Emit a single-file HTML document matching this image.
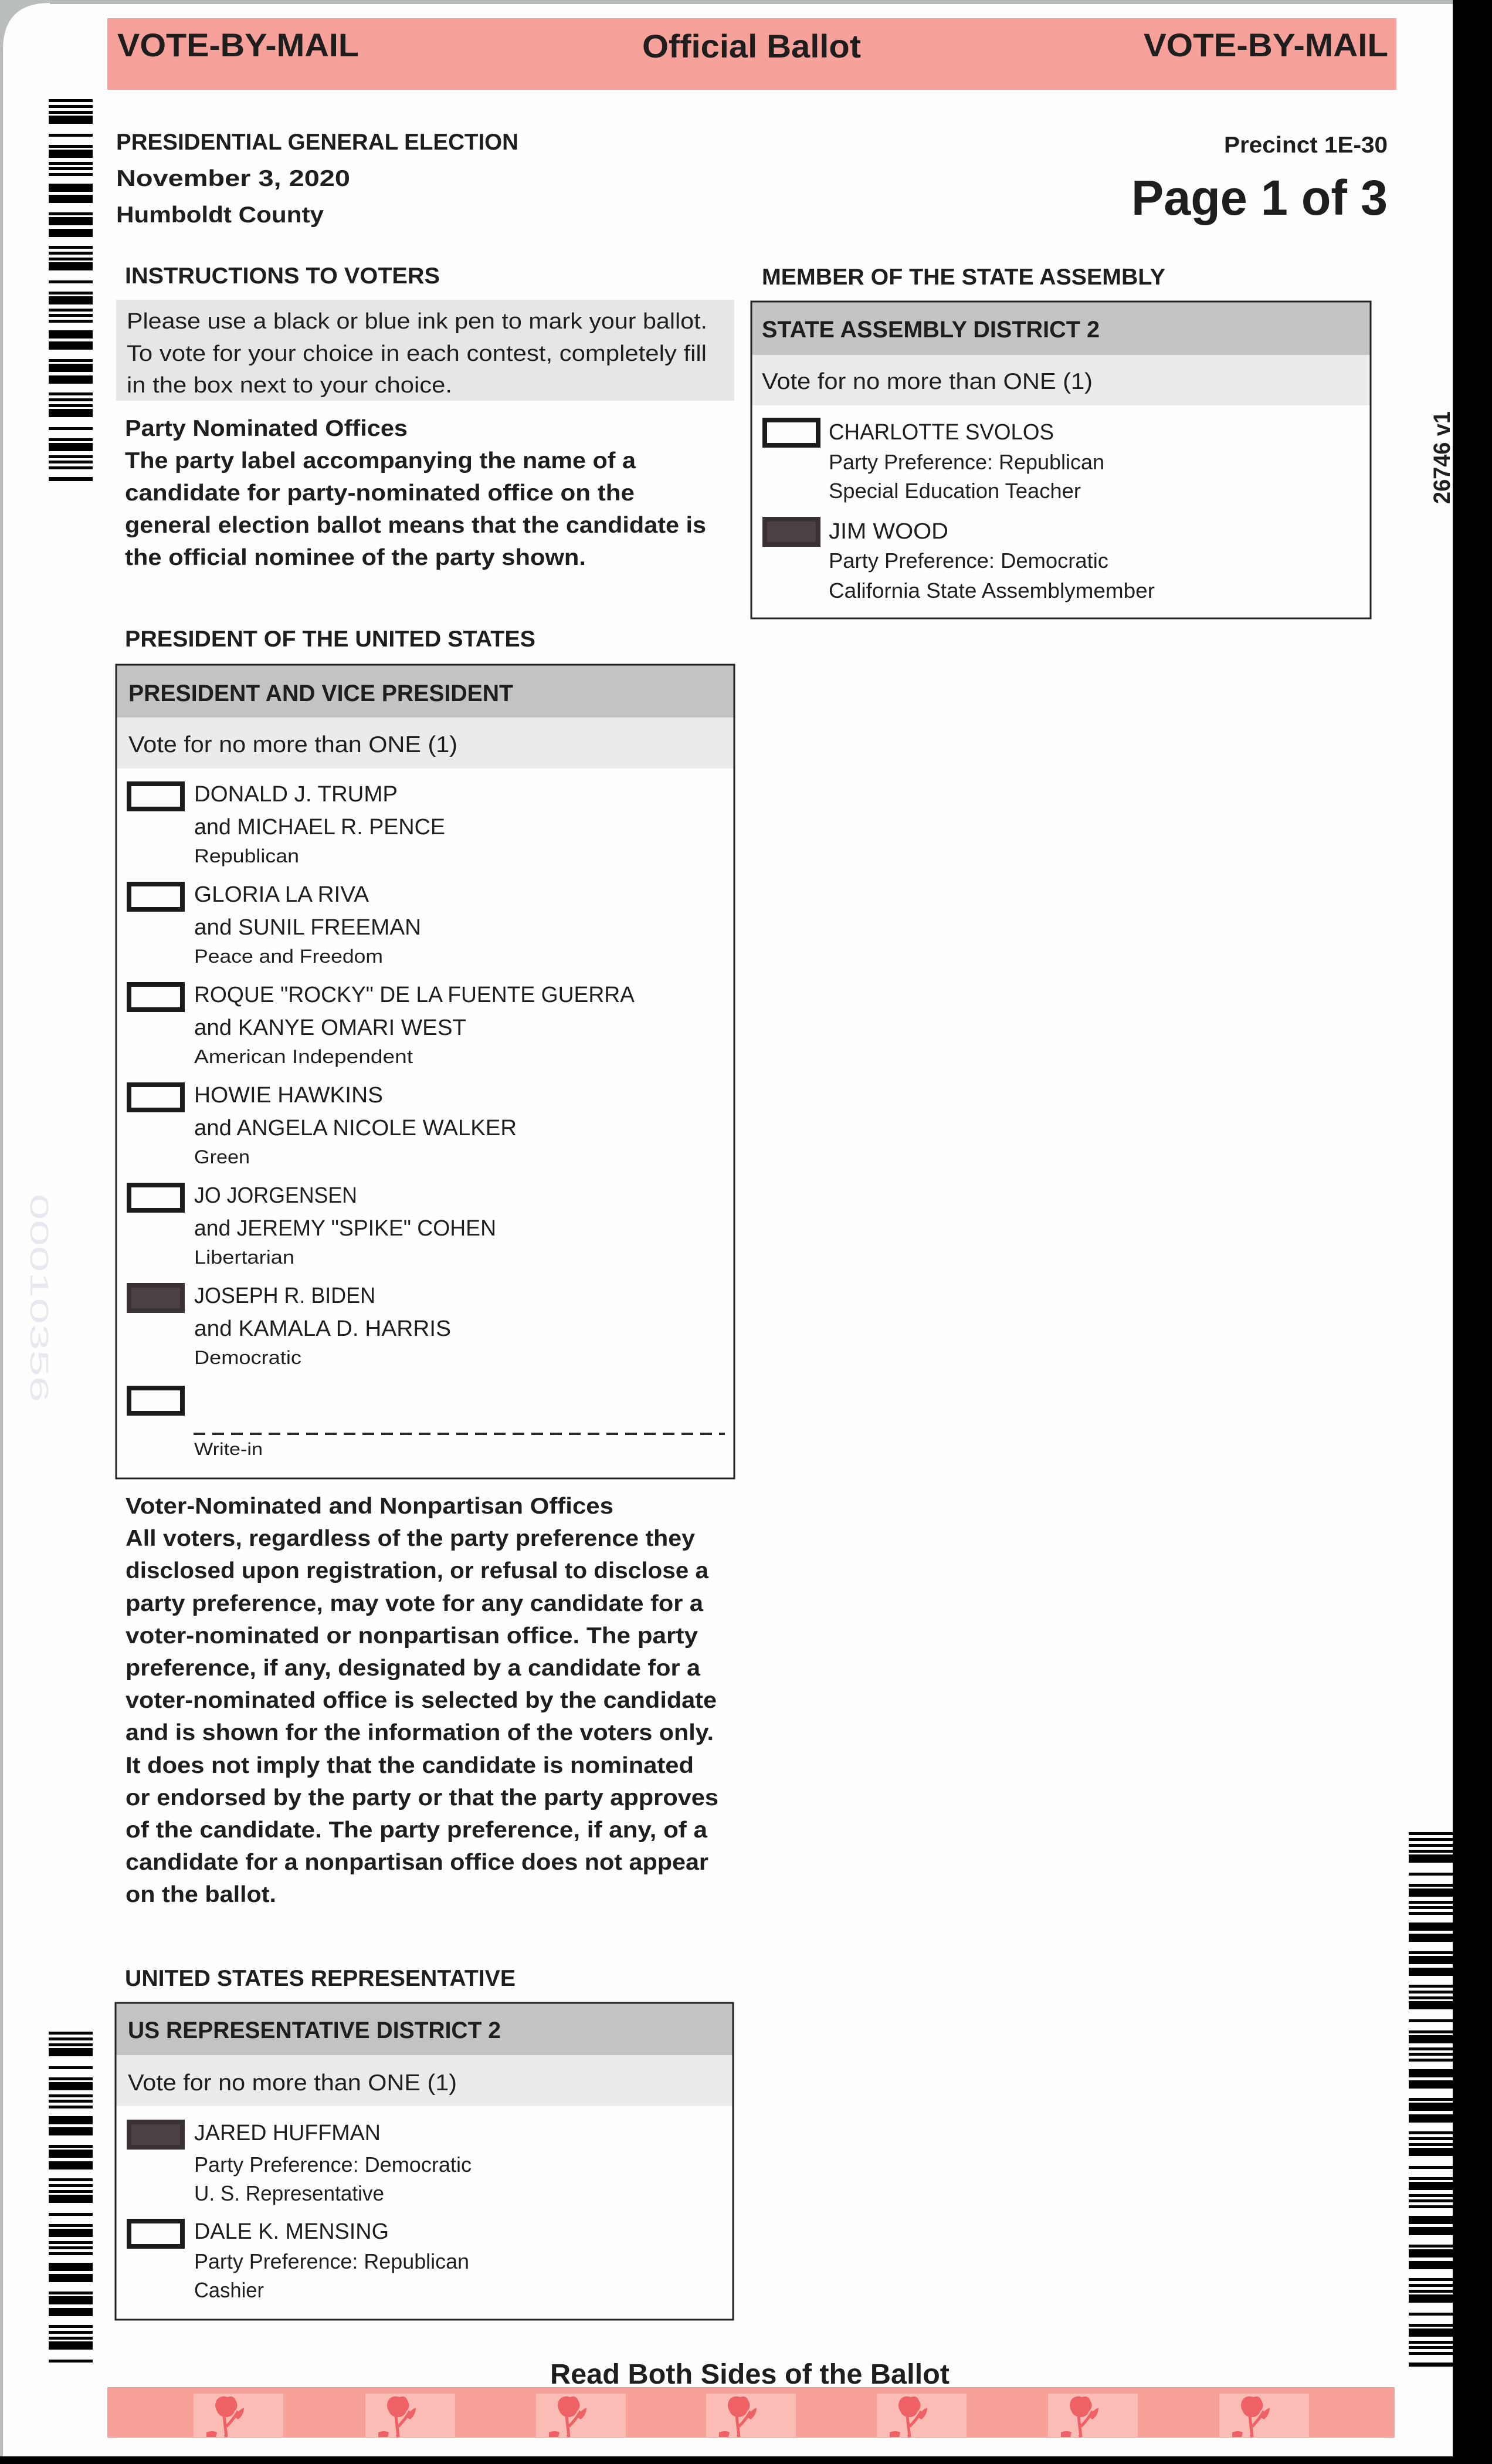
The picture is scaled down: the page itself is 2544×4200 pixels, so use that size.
<!DOCTYPE html>
<html><head><meta charset="utf-8"><style>
html,body{margin:0;padding:0;background:#b9bdbd;}
svg{display:block;}
text{font-family:"Liberation Sans",sans-serif;fill:#1e1e1e;}
.b{font-weight:bold;}
</style></head><body>
<svg xmlns="http://www.w3.org/2000/svg" width="2544" height="4200" viewBox="0 0 2544 4200">
<defs>
<g id="bc">
<rect x="0" y="0" width="75" height="5"/><rect x="0" y="10" width="75" height="5"/><rect x="0" y="20" width="75" height="5"/>
<rect x="0" y="28" width="75" height="14"/><rect x="0" y="59" width="75" height="5"/><rect x="0" y="78" width="75" height="5"/>
<rect x="0" y="86" width="75" height="14"/><rect x="0" y="107" width="75" height="5"/><rect x="0" y="116" width="75" height="5"/>
<rect x="0" y="126" width="75" height="5"/><rect x="0" y="144" width="75" height="14"/><rect x="0" y="163" width="75" height="14"/>
<rect x="0" y="193" width="75" height="5"/><rect x="0" y="201" width="75" height="14"/><rect x="0" y="221" width="75" height="14"/>
</g>
<g id="cb"><rect x="4" y="4" width="91" height="43" fill="none" stroke="#1c1c1c" stroke-width="8"/></g>
<g id="cbf"><rect x="0" y="0" width="99" height="51" fill="#3a3134"/><rect x="8" y="8" width="83" height="35" fill="#4a4045"/></g>
<g id="fl">
<rect x="0" y="0" width="153" height="74" fill="#fbbcb5"/>
<path d="M40 10 q8-8 18-4 q10-4 14 6 q6 10-2 18 q-4 10-14 10 q-12 0-16-10 q-6-10 0-20z" fill="#ee6266"/>
<path d="M52 38 l4 36 M56 56 q12-12 20-26 M56 74 l-2-4" stroke="#ee6266" stroke-width="5" fill="none"/>
<path d="M70 40 q6-12 16-16 q0 12-10 20 z" fill="#ee6266"/>
<path d="M22 66 q10-4 18 0 l-2 8 h-16z" fill="#ee6266"/>
</g>
</defs>
<!-- page -->
<path d="M5 85 Q5 5 85 5 H2477 V4187 H5 Z" fill="#fefefe"/>
<rect x="2477" y="0" width="67" height="4200" fill="#000"/>
<rect x="0" y="4187" width="2544" height="13" fill="#000"/>
<rect x="85" y="0" width="2392" height="7" fill="#b4b8b8"/>

<!-- header -->
<rect x="183" y="31" width="2198" height="122" fill="#f6a29b"/>
<text class="b" x="200" y="96" font-size="56" textLength="412" lengthAdjust="spacingAndGlyphs">VOTE-BY-MAIL</text>
<text class="b" x="1095" y="98" font-size="56" textLength="373" lengthAdjust="spacingAndGlyphs">Official Ballot</text>
<text class="b" x="1950" y="96" font-size="56" textLength="417" lengthAdjust="spacingAndGlyphs">VOTE-BY-MAIL</text>

<!-- barcodes -->
<use href="#bc" x="83" y="169"/><use href="#bc" x="83" y="419"/><use href="#bc" x="83" y="669"/>
<use href="#bc" x="83" y="3463"/><use href="#bc" x="83" y="3713"/><use href="#bc" x="83" y="3963" />
<rect x="2402" y="3123" width="75" height="5"/>
<use href="#bc" x="2402" y="3133"/><use href="#bc" x="2402" y="3383"/><use href="#bc" x="2402" y="3633"/><use href="#bc" x="2402" y="3883"/>
<rect x="6" y="4030" width="170" height="157" fill="#fefefe"/>
<rect x="6" y="820" width="170" height="100" fill="#fefefe"/>
<rect x="2390" y="4034" width="87" height="153" fill="#fefefe"/>

<text x="0" y="0" font-size="44" style="fill:#e8e9f0" transform="translate(52,2035) rotate(90)" textLength="355" lengthAdjust="spacingAndGlyphs">00010356</text>
<text class="b" x="0" y="0" font-size="40" transform="translate(2472,859) rotate(-90)" textLength="158" lengthAdjust="spacingAndGlyphs">26746 v1</text>

<!-- election info -->
<text class="b" x="198" y="255" font-size="39" textLength="686" lengthAdjust="spacingAndGlyphs">PRESIDENTIAL GENERAL ELECTION</text>
<text class="b" x="198" y="317" font-size="39" textLength="399" lengthAdjust="spacingAndGlyphs">November 3, 2020</text>
<text class="b" x="198" y="379" font-size="39" textLength="354" lengthAdjust="spacingAndGlyphs">Humboldt County</text>
<text class="b" x="2087" y="260" font-size="39" textLength="279" lengthAdjust="spacingAndGlyphs">Precinct 1E-30</text>
<text class="b" x="1929" y="366" font-size="84" textLength="437" lengthAdjust="spacingAndGlyphs">Page 1 of 3</text>

<!-- instructions -->
<text class="b" x="213" y="483" font-size="39" textLength="537" lengthAdjust="spacingAndGlyphs">INSTRUCTIONS TO VOTERS</text>
<rect x="198" y="511" width="1054" height="172" fill="#e6e6e6"/>
<text x="216" y="560" font-size="38" textLength="990" lengthAdjust="spacingAndGlyphs">Please use a black or blue ink pen to mark your ballot.</text>
<text x="216" y="615" font-size="38" textLength="989" lengthAdjust="spacingAndGlyphs">To vote for your choice in each contest, completely fill</text>
<text x="216" y="669" font-size="38" textLength="555" lengthAdjust="spacingAndGlyphs">in the box next to your choice.</text>
<text class="b" x="213" y="743" font-size="39" textLength="482" lengthAdjust="spacingAndGlyphs">Party Nominated Offices</text>
<text class="b" x="213" y="798" font-size="39" textLength="871" lengthAdjust="spacingAndGlyphs">The party label accompanying the name of a</text>
<text class="b" x="213" y="853" font-size="39" textLength="869" lengthAdjust="spacingAndGlyphs">candidate for party-nominated office on the</text>
<text class="b" x="213" y="908" font-size="39" textLength="991" lengthAdjust="spacingAndGlyphs">general election ballot means that the candidate is</text>
<text class="b" x="213" y="963" font-size="39" textLength="786" lengthAdjust="spacingAndGlyphs">the official nominee of the party shown.</text>

<!-- president -->
<text class="b" x="213" y="1102" font-size="39" textLength="700" lengthAdjust="spacingAndGlyphs">PRESIDENT OF THE UNITED STATES</text>
<rect x="198" y="1133" width="1054" height="90" fill="#c3c3c3"/>
<rect x="198" y="1223" width="1054" height="87" fill="#ebebeb"/>
<rect x="198" y="1133" width="1054" height="1387" fill="none" stroke="#222" stroke-width="3"/>
<text class="b" x="219" y="1195" font-size="40" textLength="656" lengthAdjust="spacingAndGlyphs">PRESIDENT AND VICE PRESIDENT</text>
<text x="219" y="1282" font-size="39" textLength="561" lengthAdjust="spacingAndGlyphs">Vote for no more than ONE (1)</text>

<use href="#cb" x="216" y="1332"/>
<text x="331" y="1366" font-size="38" textLength="347" lengthAdjust="spacingAndGlyphs">DONALD J. TRUMP</text>
<text x="331" y="1422" font-size="38" textLength="428" lengthAdjust="spacingAndGlyphs">and MICHAEL R. PENCE</text>
<text x="331" y="1470" font-size="32" textLength="179" lengthAdjust="spacingAndGlyphs">Republican</text>

<use href="#cb" x="216" y="1503"/>
<text x="331" y="1537" font-size="38" textLength="298" lengthAdjust="spacingAndGlyphs">GLORIA LA RIVA</text>
<text x="331" y="1593" font-size="38" textLength="387" lengthAdjust="spacingAndGlyphs">and SUNIL FREEMAN</text>
<text x="331" y="1641" font-size="32" textLength="322" lengthAdjust="spacingAndGlyphs">Peace and Freedom</text>

<use href="#cb" x="216" y="1674"/>
<text x="331" y="1708" font-size="38" textLength="751" lengthAdjust="spacingAndGlyphs">ROQUE "ROCKY" DE LA FUENTE GUERRA</text>
<text x="331" y="1764" font-size="38" textLength="464" lengthAdjust="spacingAndGlyphs">and KANYE OMARI WEST</text>
<text x="331" y="1812" font-size="32" textLength="373" lengthAdjust="spacingAndGlyphs">American Independent</text>

<use href="#cb" x="216" y="1845"/>
<text x="331" y="1879" font-size="38" textLength="322" lengthAdjust="spacingAndGlyphs">HOWIE HAWKINS</text>
<text x="331" y="1935" font-size="38" textLength="550" lengthAdjust="spacingAndGlyphs">and ANGELA NICOLE WALKER</text>
<text x="331" y="1983" font-size="32" textLength="95" lengthAdjust="spacingAndGlyphs">Green</text>

<use href="#cb" x="216" y="2016"/>
<text x="331" y="2050" font-size="38" textLength="278" lengthAdjust="spacingAndGlyphs">JO JORGENSEN</text>
<text x="331" y="2106" font-size="38" textLength="515" lengthAdjust="spacingAndGlyphs">and JEREMY "SPIKE" COHEN</text>
<text x="331" y="2154" font-size="32" textLength="171" lengthAdjust="spacingAndGlyphs">Libertarian</text>

<use href="#cbf" x="216" y="2187"/>
<text x="331" y="2221" font-size="38" textLength="309" lengthAdjust="spacingAndGlyphs">JOSEPH R. BIDEN</text>
<text x="331" y="2277" font-size="38" textLength="438" lengthAdjust="spacingAndGlyphs">and KAMALA D. HARRIS</text>
<text x="331" y="2325" font-size="32" textLength="183" lengthAdjust="spacingAndGlyphs">Democratic</text>

<use href="#cb" x="216" y="2362"/>
<line x1="330" y1="2444" x2="1236" y2="2444" stroke="#2a2a2a" stroke-width="4" stroke-dasharray="20 12"/>
<text x="331" y="2480" font-size="30" textLength="117" lengthAdjust="spacingAndGlyphs">Write-in</text>

<!-- voter-nominated -->
<g font-size="39">
<text class="b" x="214" y="2580" textLength="832" lengthAdjust="spacingAndGlyphs">Voter-Nominated and Nonpartisan Offices</text>
<text class="b" x="214" y="2635" textLength="971" lengthAdjust="spacingAndGlyphs">All voters, regardless of the party preference they</text>
<text class="b" x="214" y="2690" textLength="994" lengthAdjust="spacingAndGlyphs">disclosed upon registration, or refusal to disclose a</text>
<text class="b" x="214" y="2746" textLength="985" lengthAdjust="spacingAndGlyphs">party preference, may vote for any candidate for a</text>
<text class="b" x="214" y="2801" textLength="976" lengthAdjust="spacingAndGlyphs">voter-nominated or nonpartisan office.  The party</text>
<text class="b" x="214" y="2856" textLength="980" lengthAdjust="spacingAndGlyphs">preference, if any, designated by a candidate for a</text>
<text class="b" x="214" y="2911" textLength="1008" lengthAdjust="spacingAndGlyphs">voter-nominated office is selected by the candidate</text>
<text class="b" x="214" y="2966" textLength="1003" lengthAdjust="spacingAndGlyphs">and is shown for the information of the voters only.</text>
<text class="b" x="214" y="3022" textLength="969" lengthAdjust="spacingAndGlyphs">It does not imply that the candidate is nominated</text>
<text class="b" x="214" y="3077" textLength="1011" lengthAdjust="spacingAndGlyphs">or endorsed by the party or that the party approves</text>
<text class="b" x="214" y="3132" textLength="992" lengthAdjust="spacingAndGlyphs">of the candidate.  The party preference, if any, of a</text>
<text class="b" x="214" y="3187" textLength="994" lengthAdjust="spacingAndGlyphs">candidate for a nonpartisan office does not appear</text>
<text class="b" x="214" y="3242" textLength="257" lengthAdjust="spacingAndGlyphs">on the ballot.</text>
</g>

<!-- US rep -->
<text class="b" x="213" y="3385" font-size="39" textLength="666" lengthAdjust="spacingAndGlyphs">UNITED STATES REPRESENTATIVE</text>
<rect x="197" y="3414" width="1053" height="89" fill="#c3c3c3"/>
<rect x="197" y="3503" width="1053" height="87" fill="#ebebeb"/>
<rect x="197" y="3414" width="1053" height="540" fill="none" stroke="#222" stroke-width="3"/>
<text class="b" x="218" y="3474" font-size="40" textLength="636" lengthAdjust="spacingAndGlyphs">US REPRESENTATIVE DISTRICT 2</text>
<text x="218" y="3563" font-size="39" textLength="561" lengthAdjust="spacingAndGlyphs">Vote for no more than ONE (1)</text>
<use href="#cbf" x="216" y="3613"/>
<text x="331" y="3648" font-size="38" textLength="318" lengthAdjust="spacingAndGlyphs">JARED HUFFMAN</text>
<text x="331" y="3702" font-size="36" textLength="473" lengthAdjust="spacingAndGlyphs">Party Preference: Democratic</text>
<text x="331" y="3751" font-size="36" textLength="324" lengthAdjust="spacingAndGlyphs">U. S. Representative</text>
<use href="#cb" x="216" y="3782"/>
<text x="331" y="3816" font-size="38" textLength="332" lengthAdjust="spacingAndGlyphs">DALE K. MENSING</text>
<text x="331" y="3867" font-size="36" textLength="469" lengthAdjust="spacingAndGlyphs">Party Preference: Republican</text>
<text x="331" y="3916" font-size="36" textLength="119" lengthAdjust="spacingAndGlyphs">Cashier</text>

<!-- state assembly -->
<text class="b" x="1299" y="485" font-size="39" textLength="688" lengthAdjust="spacingAndGlyphs">MEMBER OF THE STATE ASSEMBLY</text>
<rect x="1281" y="514" width="1056" height="91" fill="#c3c3c3"/>
<rect x="1281" y="605" width="1056" height="86" fill="#ebebeb"/>
<rect x="1281" y="514" width="1056" height="540" fill="none" stroke="#222" stroke-width="3"/>
<text class="b" x="1299" y="575" font-size="40" textLength="576" lengthAdjust="spacingAndGlyphs">STATE ASSEMBLY DISTRICT 2</text>
<text x="1299" y="663" font-size="39" textLength="564" lengthAdjust="spacingAndGlyphs">Vote for no more than ONE (1)</text>
<use href="#cb" x="1300" y="712"/>
<text x="1413" y="749" font-size="38" textLength="384" lengthAdjust="spacingAndGlyphs">CHARLOTTE SVOLOS</text>
<text x="1413" y="800" font-size="36" textLength="470" lengthAdjust="spacingAndGlyphs">Party Preference: Republican</text>
<text x="1413" y="849" font-size="36" textLength="430" lengthAdjust="spacingAndGlyphs">Special Education Teacher</text>
<use href="#cbf" x="1300" y="881"/>
<text x="1413" y="918" font-size="38" textLength="204" lengthAdjust="spacingAndGlyphs">JIM WOOD</text>
<text x="1413" y="968" font-size="36" textLength="477" lengthAdjust="spacingAndGlyphs">Party Preference: Democratic</text>
<text x="1413" y="1019" font-size="36" textLength="556" lengthAdjust="spacingAndGlyphs">California State Assemblymember</text>

<!-- footer -->
<text class="b" x="938" y="4063" font-size="48" textLength="681" lengthAdjust="spacingAndGlyphs">Read Both Sides of the Ballot</text>
<rect x="183" y="4069" width="2195" height="86" fill="#f7a199"/>
<use href="#fl" x="330" y="4080"/><use href="#fl" x="623" y="4080"/><use href="#fl" x="914" y="4080"/>
<use href="#fl" x="1204" y="4080"/><use href="#fl" x="1495" y="4080"/><use href="#fl" x="1787" y="4080"/><use href="#fl" x="2079" y="4080"/>
</svg>
</body></html>
